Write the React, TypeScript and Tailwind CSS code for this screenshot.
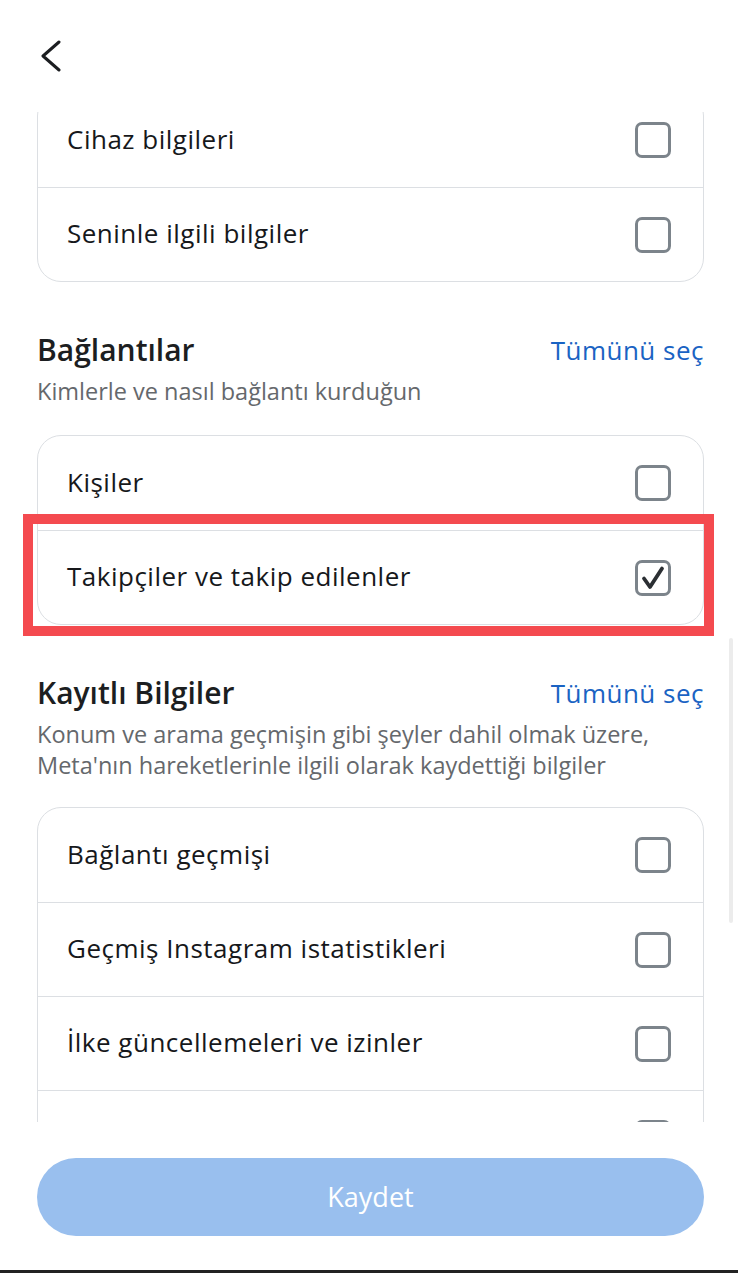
type Row = { label: string; checked?: boolean };

function Checkbox({ checked }: { checked?: boolean }) {
    return (
        <div className="w-[36px] h-[36px] rounded-[7px] border-[3px] border-[#7c848b] flex items-center justify-center shrink-0">
            {checked && (
                <svg width="28" height="28" viewBox="0 0 28 28" fill="none">
                    <path
                        d="M5 14.5 L11 23 L23 4.5"
                        stroke="#2b2f33"
                        strokeWidth="3.8"
                        strokeLinecap="round"
                        strokeLinejoin="round"
                    />
                </svg>
            )}
        </div>
    );
}

function Card({ rows }: { rows: Row[] }) {
    return (
        <div className="rounded-[24px] border border-[#dcdfe3] bg-white">
            {rows.map((r, i) => (
                <div
                    key={i}
                    className={`h-[94px] flex items-center justify-between pl-[29px] pr-[32px] ${i > 0 ? 'border-t border-[#dcdfe3]' : ''}`}
                >
                    <span className="text-[26px] font-medium tracking-[0.5px] leading-[32px] text-[#16181b] -mt-[3px]">
                        {r.label}
                    </span>
                    <Checkbox checked={r.checked} />
                </div>
            ))}
        </div>
    );
}

function SectionHead({ title, lines }: { title: string; lines: string[] }) {
    return (
        <div>
            <div className="flex items-center justify-between h-[32px]">
                <h2 className="text-[30px] font-semibold text-[#1c1e21] leading-[32px]">{title}</h2>
                <span className="text-[26px] font-medium tracking-[0.5px] text-[#1a63c3] leading-[32px]">Tümünü seç</span>
            </div>
            <div className="mt-[10px] text-[23.5px] leading-[31px] text-[#65686c]">
                {lines.map((l) => (
                    <p key={l}>{l}</p>
                ))}
            </div>
        </div>
    );
}

export default function App() {
    return (
        <div
            className="relative w-[738px] h-[1273px] bg-white flex flex-col overflow-hidden"
            style={{ fontFamily: '"Open Sans", "Noto Sans", sans-serif' }}
        >
            {/* ヘッダー */}
            <header className="h-[112px] shrink-0 pl-[40px] pt-[40px]">
                <svg width="22" height="32" viewBox="0 0 22 32" fill="none">
                    <path
                        d="M19 2 L3 16 L19 30"
                        stroke="#1c1e21"
                        strokeWidth="3"
                        strokeLinecap="round"
                        strokeLinejoin="round"
                    />
                </svg>
            </header>

            {/* スクロール領域 */}
            <div className="h-[1010px] shrink-0 overflow-hidden pl-[37px] pr-[34px]">
                <div className="-mt-[20px]">
                    <Card rows={[{ label: 'Cihaz bilgileri' }, { label: 'Seninle ilgili bilgiler' }]} />

                    <div className="mt-[52px]">
                        <SectionHead title="Bağlantılar" lines={['Kimlerle ve nasıl bağlantı kurduğun']} />
                    </div>
                    <div className="mt-[28px]">
                        <Card rows={[{ label: 'Kişiler' }, { label: 'Takipçiler ve takip edilenler', checked: true }]} />
                    </div>

                    <div className="mt-[52px]">
                        <SectionHead
                            title="Kayıtlı Bilgiler"
                            lines={[
                                'Konum ve arama geçmişin gibi şeyler dahil olmak üzere,',
                                "Meta'nın hareketlerinle ilgili olarak kaydettiği bilgiler",
                            ]}
                        />
                    </div>
                    <div className="mt-[26px]">
                        <Card
                            rows={[
                                { label: 'Bağlantı geçmişi' },
                                { label: 'Geçmiş Instagram istatistikleri' },
                                { label: 'İlke güncellemeleri ve izinler' },
                                { label: '' },
                            ]}
                        />
                    </div>
                </div>
            </div>

            {/* ボタン */}
            <div className="pl-[37px] pr-[34px] pt-[36px]">
                <button className="w-full h-[78px] rounded-full bg-[#99bfee] text-white text-[27px]">
                    Kaydet
                </button>
            </div>

            <div className="mt-auto h-[3px] bg-[#222222]" />

            {/* 強調枠 */}
            <div className="absolute left-[23px] top-[514px] w-[691px] h-[122px] border-[10px] border-[#f44a4f]" />
            {/* スクロールバー */}
            <div className="absolute left-[729px] top-[638px] w-[4px] h-[285px] rounded-full bg-[#ececec]" />
        </div>
    );
}
